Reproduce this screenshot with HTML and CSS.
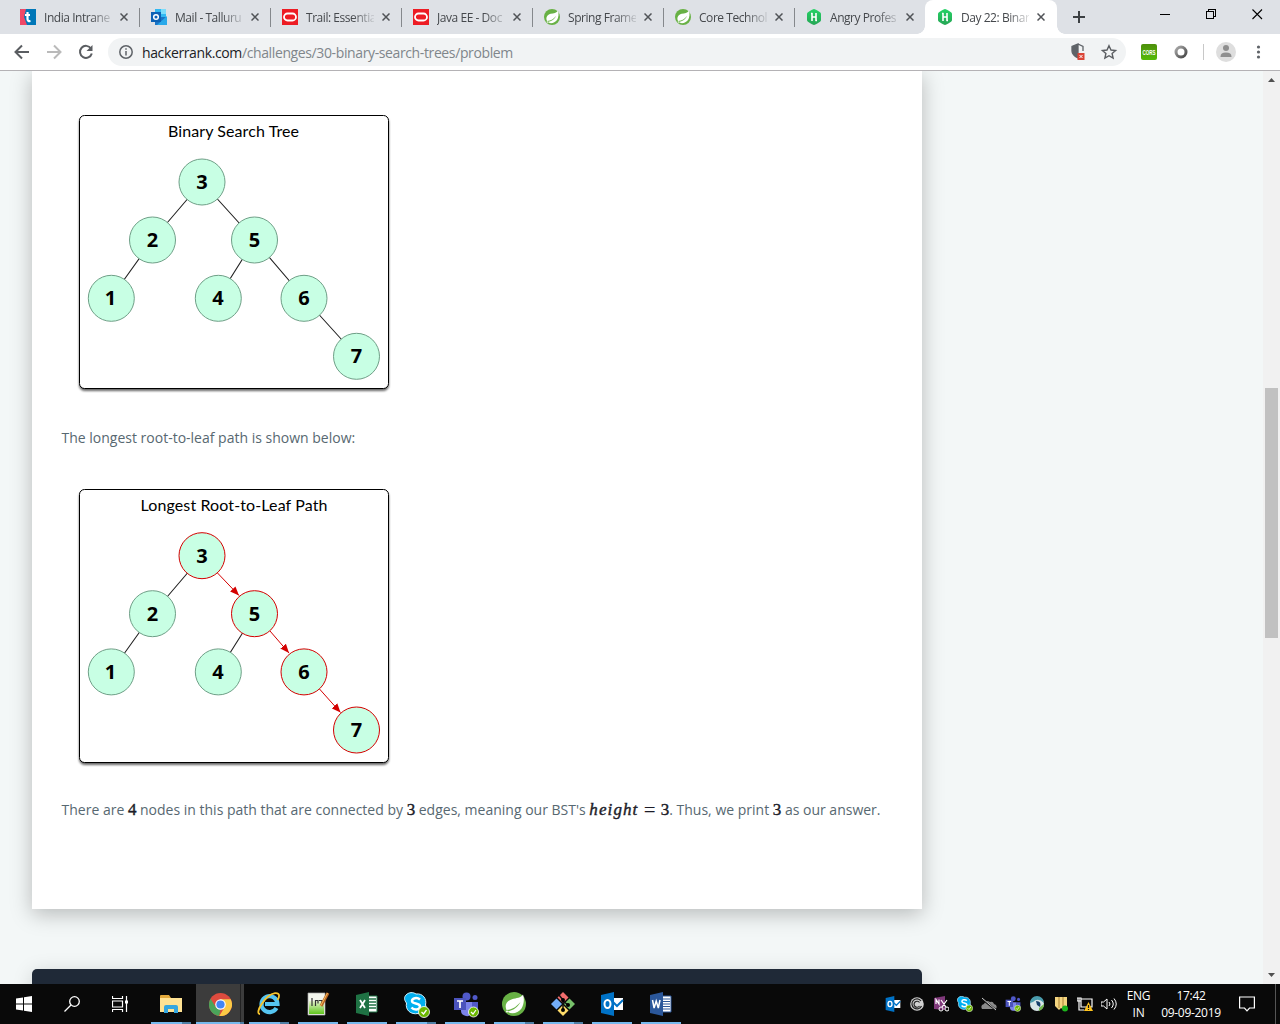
FILE: index.html
```html
<!DOCTYPE html>
<html lang="en">
<head>
<meta charset="utf-8">
<title>Day 22: Binary Search Trees</title>
<link rel="stylesheet" href="styles.css">
</head>
<body>
<svg class="defs" width="0" height="0">
  <defs>
    <linearGradient id="hg" x1="0" y1="0" x2="0" y2="1"><stop stop-color="#25d366"/><stop offset="1" stop-color="#26a555"/></linearGradient>
    <linearGradient id="corsg" x1="0" y1="0" x2="0" y2="1"><stop stop-color="#4d8f0c"/><stop offset="1" stop-color="#55bb08"/></linearGradient>
    <linearGradient id="ring" x1="0" y1="0" x2="1" y2="1"><stop stop-color="#aaa"/><stop offset="1" stop-color="#444"/></linearGradient>
    <linearGradient id="npg" x1="0" y1="0" x2="0" y2="1"><stop stop-color="#e8f5d0"/><stop offset="1" stop-color="#5fc41c"/></linearGradient>
    <marker id="arrow" markerUnits="userSpaceOnUse" markerWidth="10" markerHeight="8" refX="9" refY="4" orient="auto"><path d="M0 0.300L9 4L0 7.700z" fill="#d40000"/></marker>
    <symbol id="oracle" viewBox="0 0 16 16"><path fill="#ed1c24" d="M0 0h16v16H0z"/><rect x="2" y="4.500" width="12" height="7" rx="3.500" fill="none" stroke="#fff" stroke-width="1.800"/></symbol>
    <symbol id="leaf" viewBox="0 0 24 24"><circle cx="12" cy="12" r="12" fill="#68b145"/><path fill="#fff" d="M21 2.500C19 6 14.500 6 10 7.200C4 9 2.500 13.500 4.500 18C11 17.500 14.500 14.500 18.500 10C16 15 11.500 18.500 5.300 19.500C9 22.500 16 21.500 19.500 16.500C22 12.500 22.500 7 21 2.500z"/><circle cx="5" cy="19.500" r="1" fill="#fff"/></symbol>
    <symbol id="hr" viewBox="0 0 16 16"><path fill="url(#hg)" d="M8 0Q9 0 14 3.200Q15 4 15 5V11Q15 12 14 12.800Q9 16 8 16Q7 16 2 12.800Q1 12 1 11V5Q1 4 2 3.200Q7 0 8 0z"/><path d="M6 4v8M10 4v8M6 8h4M5 4.500h1.500M9.500 11.500h1.500" stroke="#fff" stroke-width="1.600" fill="none"/></symbol>
    <symbol id="outlook" viewBox="0 0 24 24"><path fill="#fff" d="M12 6h11v12H12z"/><path d="M13 10l4 4 6-6" fill="none" stroke="#0072c6" stroke-width="2"/><path fill="#0072c6" d="M1 3l13-3v24L1 21z"/><ellipse cx="7.500" cy="12" rx="3" ry="4" fill="none" stroke="#fff" stroke-width="2"/></symbol>
    <symbol id="skype" viewBox="0 0 26 26"><path fill="#00aff0" stroke="#d4f2ff" stroke-width="1" d="M2 3C5 0 9 0 12 2C19 1 23 7 21.500 13C24 18 20 23 14 21.500C7 23 1 18 2.500 11C0 8 0 5 2 3z"/><path d="M16 7.500C13 5 8 6 8 9C8 12.500 16 10.500 16 14.500C16 18 10 18.500 7.500 15.500" fill="none" stroke="#fff" stroke-width="2.500"/><circle cx="20" cy="20" r="5.500" fill="#6bb700" stroke="#fff" stroke-width=".8"/><path d="M17.500 20l2 2 3-4" fill="none" stroke="#fff" stroke-width="1.300"/></symbol>
    <symbol id="teams" viewBox="0 0 26 26"><circle cx="13.500" cy="4.500" r="4" fill="#5059c9"/><circle cx="22" cy="5.500" r="2.500" fill="#5059c9"/><path fill="#7b83eb" d="M8 10h11v9q-1 6-6 5q-5-1-5-5z"/><path fill="#5059c9" d="M19 10h6v7q-2 4-6 3z"/><path fill="#4b53bc" d="M1 6h12v12H1z"/><path d="M4 9h6M7 9v7" stroke="#fff" stroke-width="1.700"/><circle cx="20.500" cy="20" r="5" fill="#6bb700" stroke="#fff" stroke-width=".8"/><path d="M18 20l2 2 3-4" fill="none" stroke="#fff" stroke-width="1.200"/></symbol>
  </defs>
</svg>

<div class="tabstrip">
  <div class="tab"><svg class="fav" viewBox="0 0 16 16"><path fill="#0077b8" d="M0 0h16v16H0z"/><path fill="#ef4867" d="M0 1q0-1 1-1h5l-2 8 3 8H0z"/><path d="M7.500 3v7q0 2.500 3 2M5 6h5" fill="none" stroke="#fff" stroke-width="2.200"/></svg><span class="ttl">India Intrane</span><svg class="x" viewBox="0 0 8 8"><path d="M.5.5l7 7M7.500.5l-7 7"/></svg></div>
  <div class="tab"><svg class="fav" viewBox="0 0 16 16"><path fill="#31b8f2" d="M4 0h11v8H4z"/><path fill="#7bdcfb" d="M10 0h5v5h-5z"/><path fill="#1a75c7" d="M4 8h12v8H4z"/><path fill="#29a9ea" d="M16 7v9H6z"/><path fill="#0d62b5" d="M0 3h10v10H0z"/><circle cx="5" cy="8" r="2.300" fill="none" stroke="#fff" stroke-width="1.500"/></svg><span class="ttl">Mail - Talluru</span><svg class="x" viewBox="0 0 8 8"><path d="M.5.5l7 7M7.500.5l-7 7"/></svg></div>
  <div class="tab"><svg class="fav"><use href="#oracle"/></svg><span class="ttl">Trail: Essentia</span><svg class="x" viewBox="0 0 8 8"><path d="M.5.5l7 7M7.500.5l-7 7"/></svg></div>
  <div class="tab"><svg class="fav"><use href="#oracle"/></svg><span class="ttl">Java EE - Doc</span><svg class="x" viewBox="0 0 8 8"><path d="M.5.5l7 7M7.500.5l-7 7"/></svg></div>
  <div class="tab"><svg class="fav"><use href="#leaf"/></svg><span class="ttl">Spring Frame</span><svg class="x" viewBox="0 0 8 8"><path d="M.5.5l7 7M7.500.5l-7 7"/></svg></div>
  <div class="tab"><svg class="fav"><use href="#leaf"/></svg><span class="ttl">Core Technol</span><svg class="x" viewBox="0 0 8 8"><path d="M.5.5l7 7M7.500.5l-7 7"/></svg></div>
  <div class="tab last"><svg class="fav"><use href="#hr"/></svg><span class="ttl">Angry Profes</span><svg class="x" viewBox="0 0 8 8"><path d="M.5.5l7 7M7.500.5l-7 7"/></svg></div>
  <div class="tab active"><svg class="fav"><use href="#hr"/></svg><span class="ttl">Day 22: Binar</span><svg class="x" viewBox="0 0 8 8"><path d="M.5.5l7 7M7.500.5l-7 7"/></svg></div>
  <svg class="winctl" width="223" height="34"><path d="M16 17h12M22 11v12" stroke="#3c4043" stroke-width="2"/><g fill="none" stroke="#000" shape-rendering="crispEdges"><path d="M103 14.500h10M149.500 11.500h7v7h-7zM151.500 11v-1.500h7v7h-2"/></g><path d="M195.500 9.500l9.500 9.500M205 9.500l-9.500 9.500" stroke="#000" stroke-width="1.100"/></svg>
</div>

<div class="toolbar">
  <svg class="nav" width="108" height="36" fill="none" stroke-width="2"><path d="M29 18H16M22 11.500L15.500 18l6.500 6.500" stroke="#5a5d61"/><path d="M47 18h13M54 11.500l6.500 6.500-6.500 6.500" stroke="#bababa"/><path d="M91 14.500a6 6 0 1 0 .8 5" stroke="#5a5d61"/><path d="M92.500 11v6h-6z" fill="#5a5d61"/></svg>
  <div class="omni">
    <svg width="14" height="14" fill="none" stroke="#5f6368" stroke-width="1.500"><circle cx="7" cy="7" r="6.200"/><path d="M7 6v4.500M7 3.200v1.600"/></svg>
    <span class="url"><b>hackerrank.com</b>/challenges/30-binary-search-trees/problem</span>
    <svg class="omniact" width="54" height="20"><path d="M6 2L11 4.500V9M6 2v14Q0 13 0 9V4.500z" fill="none" stroke="#5f6368" stroke-width="1.300"/><path d="M6 2v14Q0 13 0 9V4.500z" fill="#5f6368"/><path fill="#db4437" d="M5.500 11h7v7h-7z"/><path d="M7.500 13l3 3M10.500 13l-3 3" stroke="#fff"/><path d="M37 3.700l2 4.300 4.600.5-3.500 3 1 4.600-4.100-2.400-4.100 2.400 1-4.600-3.500-3 4.600-.5z" fill="none" stroke="#5a5d61" stroke-width="1.400"/></svg>
  </div>
  <svg class="ext" width="154" height="36"><rect x="15" y="10" width="16" height="16" rx="2" fill="url(#corsg)"/><text x="16.500" y="21" font-size="8" font-weight="700" fill="#fff" textLength="13" lengthAdjust="spacingAndGlyphs">CORS</text><circle cx="55" cy="18" r="5" fill="#fff" stroke="url(#ring)" stroke-width="3"/><path d="M77.500 10v16" stroke="#c8c8c8"/><circle cx="100" cy="18" r="10" fill="#dedede"/><circle cx="100" cy="14" r="3" fill="#8e8e8e"/><path d="M94.500 22.500q0-4 5.500-4t5.500 4v.5h-11z" fill="#8e8e8e"/><g fill="#5f6368"><circle cx="132.500" cy="13" r="1.600"/><circle cx="132.500" cy="18" r="1.600"/><circle cx="132.500" cy="23" r="1.600"/></g></svg>
</div>

<div class="page">
  <main class="content">
    <section class="card">
      <svg class="tree" width="320" height="290" viewBox="0 0 320 290">
        <rect class="frame" x="5.500" y="5.500" width="309" height="273" rx="5"/>
        <text class="title" x="94" y="27" textLength="131">Binary Search Tree</text>
        <path class="edge" d="M128 72L78.500 130L37 188M128 72L180.500 130L144 188M180.500 130L230 188L282.500 246"/>
        <g class="node"><circle cx="128" cy="72" r="23"/><circle cx="78.500" cy="130" r="23"/><circle cx="180.500" cy="130" r="23"/><circle cx="37.300" cy="188.300" r="23"/><circle cx="144.300" cy="188.300" r="23"/><circle cx="230" cy="188.300" r="23"/><circle cx="282.500" cy="246.300" r="23"/></g>
        <g class="num"><text x="128" y="79">3</text><text x="78.500" y="137">2</text><text x="180.500" y="137">5</text><text x="36.500" y="195">1</text><text x="144" y="195">4</text><text x="230" y="195">6</text><text x="282.500" y="253">7</text></g>
      </svg>
      <p class="p1">The longest root-to-leaf path is shown below:</p>
      <svg class="tree" width="320" height="290" viewBox="0 0 320 290">
        <rect class="frame" x="5.500" y="5.500" width="309" height="273" rx="5"/>
        <text class="title" x="66.500" y="27" textLength="187">Longest Root-to-Leaf Path</text>
        <path class="edge" d="M128 72L78.500 130L37 188M180.500 130L144 188"/>
        <g class="hot"><path d="M143.500 89L165 111.500"/><path d="M196 147L215 169"/><path d="M245.500 205L266.500 228.500"/></g>
        <g class="node"><circle class="red" cx="128" cy="71.700" r="23"/><circle cx="78.500" cy="129.700" r="23"/><circle class="red" cx="180.500" cy="129.700" r="23"/><circle cx="37.300" cy="187.900" r="23"/><circle cx="144.300" cy="187.900" r="23"/><circle class="red" cx="230" cy="187.900" r="23"/><circle class="red" cx="282.500" cy="246" r="23"/></g>
        <g class="num"><text x="128" y="79">3</text><text x="78.500" y="137">2</text><text x="180.500" y="137">5</text><text x="36.500" y="195">1</text><text x="144" y="195">4</text><text x="230" y="195">6</text><text x="282.500" y="253">7</text></g>
      </svg>
      <p class="p2">There are <b>4</b> nodes in this path that are connected by <b>3</b> edges, meaning our BST's <b><i>height</i> <span class="eq">=</span> 3</b>. Thus, we print <b>3</b> as our answer.</p>
    </section>
    <section class="editor"></section>
  </main>
  <div class="scroll">
    <svg width="17" height="17"><path d="M5 11h7L8.500 7z" fill="#505050"/></svg>
    <div class="thumb"></div>
    <svg class="down" width="17" height="17"><path d="M5 6h7l-3.500 4z" fill="#505050"/></svg>
  </div>
</div>

<div class="taskbar">
  <div class="sys"><svg width="16" height="16" viewBox="0 0 16 16"><path fill="#fff" d="M0 2.500l7-1v6H0zM8 1.300L16 0v7.500H8zM0 8.500h7v6l-7-1zM8 8.500h8V16l-8-1.300z"/></svg></div>
  <div class="sys"><svg width="16" height="16" fill="none" stroke="#fff" stroke-width="1.300"><circle cx="10.500" cy="5.500" r="4.800"/><path d="M7 9L.5 15.500"/></svg></div>
  <div class="sys"><svg width="17" height="16" fill="none" stroke="#fff" stroke-width="1.200"><path d="M.5 0v2.500h10V0M.5 5h10v6H.5zM.5 16v-2.500h10V16M14.500 0v16"/><path fill="#fff" stroke="none" d="M13 4.500h3v3h-3z"/></svg></div>
  <div class="app split"><svg width="22" height="20" viewBox="0 0 22 20"><path fill="#e3a93b" d="M0 2q0-1 1-1h8l2 3h10v5H0z"/><path fill="#ffe293" d="M0 4h22v14H0z"/><path fill="#35a6df" d="M4 19v-6q0-2 2-2h10q2 0 2 2v6h-4v-4H8v4z"/></svg></div>
  <div class="app split current"><svg width="23" height="23" viewBox="0 0 24 24"><circle cx="12" cy="12" r="12" fill="#dd4b3e"/><path fill="#4aa45a" d="M1.600 6L7.500 15.500L12 17.500L10.500 24A12 12 0 0 1 1.600 6z"/><path fill="#fcca45" d="M12 6.500h10.600A12 12 0 0 1 10.700 24L16.500 14.500z"/><circle cx="12" cy="12" r="5.500" fill="#fff"/><circle cx="12" cy="12" r="4.300" fill="#4285f4"/></svg></div>
  <div class="app split"><svg width="24" height="24" viewBox="0 0 24 24"><path d="M19.500 16A8 8 0 1 1 20.500 12H8" fill="none" stroke="#55c5f1" stroke-width="4.200"/><path d="M3 22C-3 22 8 3 18 1.200C24 .5 22 6 20.500 8" fill="none" stroke="#f6c42c" stroke-width="1.800"/></svg></div>
  <div class="app"><svg width="24" height="24" viewBox="0 0 24 24"><path fill="#f3f6ed" stroke="#aaa" stroke-width=".7" d="M2 1h17v22H2z"/><path fill="url(#npg)" d="M3 9h15v13H3z"/><path d="M6 6v8M9.500 14V8M9 8.500h3v3M13 8.500h3v3" stroke="#333" stroke-width="1.200" fill="none"/><path d="M22 1L15 14" stroke="#b96527" stroke-width="3"/><path d="M21.500 1L14.500 14" stroke="#f5bd58"/></svg></div>
  <div class="app"><svg width="24" height="24" viewBox="0 0 24 24"><path fill="#fff" stroke="#1f7244" d="M12 4h10v16H12z"/><path d="M14 7h7M14 10h7M14 13h7M14 16h7" stroke="#1f7244" stroke-width="1.700"/><path fill="#1f7244" d="M1 3l13-3v24L1 21z"/><path d="M5 8l5 8M10 8l-5 8" stroke="#fff" stroke-width="1.800"/></svg></div>
  <div class="app split"><svg class="low" width="26" height="26"><use href="#skype"/></svg></div>
  <div class="app"><svg class="low" width="26" height="26"><use href="#teams"/></svg></div>
  <div class="app split"><svg width="24" height="24"><use href="#leaf"/></svg></div>
  <div class="app split"><svg width="24" height="24" viewBox="0 0 24 24"><path fill="#f26d6d" d="M12 0l5.500 5.500L12 11 6.500 5.500z"/><path fill="#73adf7" d="M5.500 6.500L11 12l-5.500 5.500L0 12z"/><path fill="#77c16a" d="M18.500 6.500L24 12l-5.500 5.500L13 12z"/><path fill="#ffdc69" d="M12 13l5.500 5.500L12 24l-5.500-5.500z"/><path d="M8 3l4 5v10M12 9l5 4" stroke="#111" stroke-width="1.500" fill="none"/><circle cx="12" cy="8" r="2"/><circle cx="17" cy="13" r="2"/><circle cx="12" cy="18" r="2"/></svg></div>
  <div class="app"><svg width="24" height="24"><use href="#outlook"/></svg></div>
  <div class="app"><svg width="24" height="24" viewBox="0 0 24 24"><path fill="#fff" stroke="#2b579a" d="M12 4h10v16H12z"/><path d="M14 7h7M14 9.500h7M14 12h7M14 14.500h7M14 17h7" stroke="#2b579a"/><path fill="#2b579a" d="M1 3l13-3v24L1 21z"/><path d="M3.500 8l1.600 8 2.100-7 2.100 7 1.700-8" fill="none" stroke="#fff" stroke-width="1.500"/></svg></div>
  <div class="tray">
    <svg><use href="#outlook"/></svg>
    <svg viewBox="0 0 16 16"><circle cx="8" cy="8" r="6.800" fill="#d0d0d0"/><path d="M12 5a5 5 0 1 0 .5 5M10.500 6.500a3 3 0 1 0 0 3.500" fill="none" stroke="#222" stroke-width="1.200"/></svg>
    <svg viewBox="0 0 16 16"><path fill="#80397b" d="M1 2l11-2v14L1 13z"/><path d="M3 8V3.500L6 8V3.500M8 4l5 7M14 4L9 11" stroke="#fff" stroke-width="1.200" fill="none"/><g fill="none" stroke="#fff"><circle cx="8" cy="13" r="2"/><circle cx="14" cy="13" r="2"/></g></svg>
    <svg><use href="#skype"/></svg>
    <svg viewBox="0 0 16 16"><path fill="#8b8b8b" d="M1 13q-2-4 2-5q2-5 6-2q3-1 4 2q4 1 2 5z"/><path d="M1 3l14 11" stroke="#111" stroke-width="2"/><path d="M1 2l14 12" stroke="#ccc"/></svg>
    <svg><use href="#teams"/></svg>
    <svg viewBox="0 0 16 16"><circle cx="8" cy="8" r="7" fill="#d8e5e7"/><path fill="#4a9cad" d="M1 7A7 7 0 0 1 15 7Q9 1 4 6z"/><path fill="#143d69" d="M7 5q6 0 4 6l-3-2z"/><path fill="#73b74c" d="M10 12l5-4q0 5-5 7z"/></svg>
    <svg viewBox="0 0 16 16"><path fill="#f4d580" d="M2 1h12v11l-3 2-3-2-2 2-4-4z"/><path d="M6 1v11M10 1v11" stroke="#aa8134"/><circle cx="12" cy="12.500" r="3" fill="#1db51d"/></svg>
    <svg viewBox="0 0 16 16"><path d="M4 3h11v8H4zM2 2v12h5M0 2h4v3H0z" fill="none" stroke="#fff" stroke-width="1.200"/><path fill="#ffc41d" d="M11.500 6l4.500 9H7z"/><path d="M11.500 9v3M11.500 13v1" stroke="#111" stroke-width="1.200"/></svg>
    <svg viewBox="0 0 16 16" fill="none" stroke="#fff"><path d="M0 6h2.500L6 3v10l-3.500-3H0zM8 6q2 2 0 4M10.500 4q3.500 4 0 8M13 2.500q4.500 5.500 0 11"/></svg>
  </div>
  <div class="lang">ENG<br>IN</div>
  <div class="clock">17:42<br>09-09-2019</div>
  <svg class="note" width="16" height="16" fill="none" stroke="#fff" stroke-width="1.200"><path d="M.6 1h14.800v11H10.500L8 14.800 5.500 12H.6z"/></svg>
  <div class="peek"></div>
</div>
</body>
</html>
```
FILE: styles.css
```css
* { box-sizing: border-box; }
body { margin: 0; width: 1280px; height: 1024px; overflow: hidden; display: flex; flex-direction: column; font-family: "Open Sans", sans-serif; background: #fff; }
svg { display: block; flex: none; }
.defs { position: absolute; }

.tabstrip { height: 34px; display: flex; background: #dee1e6; padding-left: 9px; flex: none; }
.tab { width: 131px; height: 34px; padding: 0 11px; display: flex; align-items: center; position: relative; flex: none; }
.tab::after { content: ""; position: absolute; right: 0; top: 8px; width: 1px; height: 19px; background: #85888c; }
.tab.last::after { display: none; }
.tab.active { background: #fff; border-radius: 8px 8px 0 0; width: 132px; margin-left: -1px; padding-left: 12px; }
.tab.active::before, .tab.active::after { content: ""; position: absolute; top: auto; bottom: 0; width: 8px; height: 8px; }
.tab.active::before { left: -8px; background: radial-gradient(circle at 0 0, #dee1e6 7.500px, #fff 8px); }
.tab.active::after { right: -8px; background: radial-gradient(circle at 100% 0, #dee1e6 7.500px, #fff 8px); }
.fav { width: 16px; height: 16px; }
.ttl { width: 68px; margin-left: 8px; font-size: 12px; letter-spacing: -.45px; white-space: nowrap; color: #45484c; -webkit-mask-image: linear-gradient(90deg, #000 68%, rgba(0,0,0,.15)); mask-image: linear-gradient(90deg, #000 68%, rgba(0,0,0,.15)); }
.x { width: 8px; height: 8px; margin-left: 8px; stroke: #505357; stroke-width: 1.500; }

.toolbar { height: 37px; display: flex; border-bottom: 1px solid #b4b2b5; flex: none; }
.omni { width: 1018px; height: 28px; margin-top: 4px; border-radius: 14px; background: #f1f3f4; padding-left: 11px; display: flex; align-items: center; }
.url { margin-left: 9px; font-size: 14px; color: #80868b; white-space: nowrap; letter-spacing: -.38px; }
.url b { font-weight: 400; color: #202124; }
.omniact { margin-left: auto; overflow: visible; }
.ext { font-family: "Liberation Sans", sans-serif; }

.page { height: 913px; display: flex; background: #f3f7f7; overflow: hidden; flex: none; }
.content { width: 1263px; padding-left: 32px; }
.card { width: 890px; height: 838px; padding: 39px 30px 0 29.500px; background: #fff; box-shadow: 0 5px 20px rgba(0,0,0,.25); }
.tree { margin-left: 12.500px; }
.frame { fill: #fff; stroke: #000; filter: drop-shadow(0 2px 1px rgba(0,0,0,.6)); }
.title { font: 16px Lato, sans-serif; fill: #000; }
.edge { fill: none; stroke: #222; stroke-width: 1.100; }
.node circle { fill: #c8ffe4; stroke: #6f9f87; }
.node .red { stroke: #d40000; }
.hot path { stroke: #d40000; marker-end: url(#arrow); }
.num text { font: 700 20px "Open Sans", sans-serif; text-anchor: middle; }
.card p { margin: 0; height: 20px; font-size: 14px; line-height: 20px; color: #576871; white-space: nowrap; }
.card .p1 { margin: 28px 0 36px; }
.card .p2 { margin-top: 26px; }
.card p b { font: 400 17px/16px "Liberation Serif", serif; color: #1c1c28; -webkit-text-stroke: .4px #1c1c28; }
.card p i { letter-spacing: 1.100px; }
.card .eq { display: inline-block; font-size: 21px; line-height: 16px; margin: 0 1px; transform: translateY(2px); -webkit-text-stroke: 0; }
.editor { width: 890px; height: 30px; margin-top: 60px; border-radius: 5px 5px 0 0; background: #1f2937; box-shadow: 0 3px 20px rgba(0,0,0,.15); }
.scroll { width: 17px; background: #f1f1f1; display: flex; flex-direction: column; }
.thumb { width: 13px; height: 250px; margin: 300px 0 0 2px; background: #c1c1c1; }
.down { margin-top: auto; }

.taskbar { height: 40px; background: #090909; display: flex; flex: none; color: #fff; }
.sys { width: 48px; display: flex; align-items: center; justify-content: center; }
.sys:nth-child(3) { margin-right: 2px; }
.app { width: 49px; height: 40px; display: flex; align-items: center; justify-content: center; position: relative; }
.app svg { margin-left: 1px; }
.app .low { margin: 2px 0 0 2px; }
.app::after { content: ""; position: absolute; bottom: 0; left: 5px; width: 40px; height: 2px; background: #76b9ed; }
.app.split::after { background: linear-gradient(90deg, #76b9ed 31px, #4f7fa5 31px); }
.app.current { background: linear-gradient(90deg, #090909 1px, #3c3c3c 1px, #3c3c3c 45px, #222 45px, #222 46px, #3c3c3c 46px); }
.app.current::after { left: 1px; width: 48px; background: linear-gradient(90deg, #76b9ed 44px, #4f7fa5 44px); }
.tray { margin-left: 200px; width: 237px; display: flex; align-items: center; gap: 8px; }
.tray svg { width: 16px; height: 16px; }
.lang, .clock { font-size: 12px; line-height: 17px; padding-top: 3px; text-align: center; letter-spacing: -.3px; white-space: nowrap; }
.lang { width: 33px; }
.clock { width: 72px; }
.note { margin: 12px 0 0 12px; }
.peek { width: 1px; height: 40px; margin-left: 20px; background: #555; }
```
